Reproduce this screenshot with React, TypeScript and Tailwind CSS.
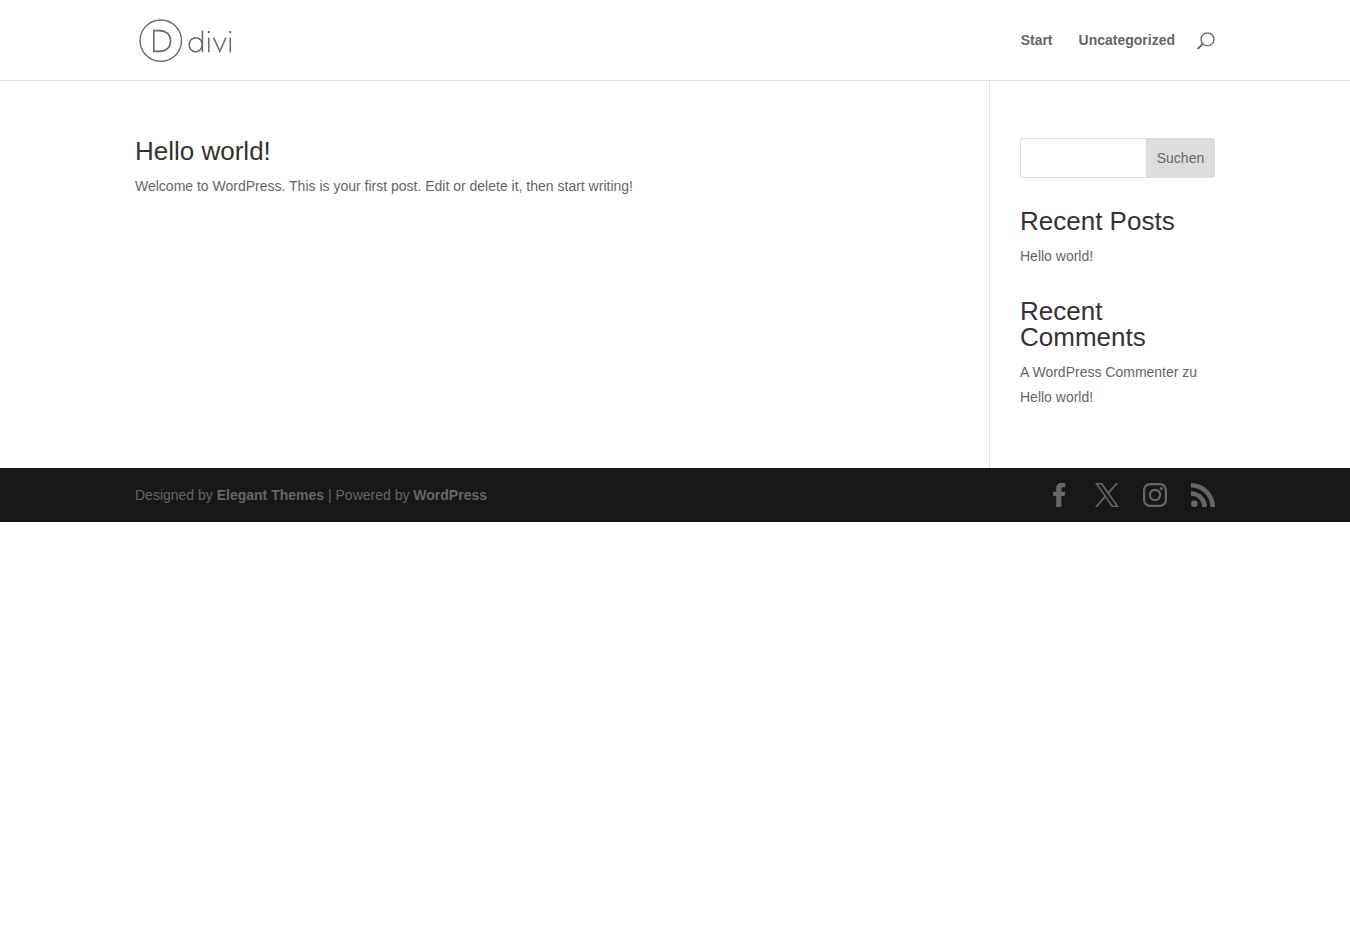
import React from 'react';

function Logo() {
  return (
    <svg viewBox="0 0 94 44" className="ml-1 h-11 w-[94px]" fill="none" stroke="#666a6e" role="img" aria-label="divi">
      <circle cx="21.8" cy="22.7" r="20.7" strokeWidth="1.4" />
      <path d="M14.8 12.6H20.5C27.2 12.6 31.6 16.6 31.6 23S27.2 33.4 20.5 33.4H14.8Z" strokeWidth="1.6" />
      <ellipse cx="56.7" cy="26.8" rx="6.6" ry="7" strokeWidth="1.5" />
      <path d="M63.4 12.6V34.2M69.8 19.6V34.2M74.6 19.6L80.8 33.2L87 19.6M91.3 19.6V34.2" strokeWidth="1.5" />
      <path d="M69.8 13V15.2M91.3 13V15.2" strokeWidth="1.8" />
    </svg>
  );
}

function SearchIcon() {
  return (
    <svg viewBox="0 0 18 18" className="mt-0.5 h-[18px] w-[18px]" fill="none" stroke="currentColor" aria-hidden="true">
      <circle cx="10.5" cy="7.3" r="6.5" strokeWidth="1.3" />
      <path d="M5.5 12.1L1.2 16.4" strokeWidth="2" strokeLinecap="round" />
    </svg>
  );
}

const socials = [
  {
    name: 'Facebook',
    icon: <path d="M9.2 24V13H6V8.8h3.2V5.4C9.2 1.9 11.2 0 14.8 0h3.4v4.2h-2.1c-1.3 0-1.7.6-1.7 1.8v2.8h3.8L17.6 13h-3.2v11z" />,
  },
  {
    name: 'X',
    icon: (
      <path d="M14.258 10.152L23.176 0h-2.113l-7.747 8.813L7.133 0H0l9.352 13.328L0 23.973h2.113l8.176-9.309 6.531 9.309h7.133zm-2.895 3.293l-.949-1.328L2.875 1.56h3.246l6.086 8.523.945 1.328 7.91 11.078h-3.246z" />
    ),
  },
  {
    name: 'Instagram',
    icon: (
      <>
        <rect x="1.1" y="1.1" width="21.8" height="21.8" rx="6" fill="none" stroke="currentColor" strokeWidth="2.2" />
        <circle cx="12" cy="12" r="5.1" fill="none" stroke="currentColor" strokeWidth="2.2" />
        <circle cx="18.4" cy="5.6" r="1.5" />
      </>
    ),
  },
  {
    name: 'RSS',
    icon: (
      <>
        <circle cx="3.3" cy="20.7" r="3.3" />
        <path d="M0 8.2v4.6A11.2 11.2 0 0 1 11.2 24h4.6A15.8 15.8 0 0 0 0 8.2z" />
        <path d="M0 0v4.6A19.4 19.4 0 0 1 19.4 24H24A24 24 0 0 0 0 0z" />
      </>
    ),
  },
];

const container = 'mx-auto w-4/5 max-w-[1080px]';
const heading = 'pb-2.5 text-[26px] leading-[26px] text-[#333]';

export default function App() {
  return (
    <div className="bg-white font-['Liberation_Sans',Arial,sans-serif] text-sm leading-6 text-[#666]">
      <header className="border-b border-[#e2e2e2]">
        <div className={`${container} flex h-20 items-center justify-between`}>
          <a href="#home"><Logo /></a>
          <nav className="flex items-center font-bold" aria-label="Main">
            <a href="#start" className="mr-[26px]">Start</a>
            <a href="#uncategorized" className="mr-[22px]">Uncategorized</a>
            <button type="button" aria-label="Search"><SearchIcon /></button>
          </nav>
        </div>
      </header>

      <div className={`${container} flex`}>
        <main className="flex-1 pt-[57px] pb-[58px]">
          <article>
            <h1 className={heading}>Hello world!</h1>
            <p>Welcome to WordPress. This is your first post. Edit or delete it, then start writing!</p>
          </article>
        </main>
        <aside className="w-[226px] border-l border-[#e2e2e2] pt-[57px] pb-[58px] pl-[30px]">
          <form className="flex h-10" role="search" onSubmit={(e) => e.preventDefault()}>
            <input
              type="text"
              aria-label="Suchen"
              className="min-w-0 flex-1 rounded-l-[3px] border border-r-0 border-[#ddd] px-2 outline-none"
            />
            <button type="submit" className="w-[69px] rounded-r-[3px] bg-[#ddd]">Suchen</button>
          </form>
          <section className="mt-[30px]">
            <h2 className={heading}>Recent Posts</h2>
            <ul>
              <li><a href="#hello-world">Hello world!</a></li>
            </ul>
          </section>
          <section className="mt-[30px]">
            <h2 className={heading}>Recent Comments</h2>
            <ul>
              <li className="leading-[25px]">
                <a href="#commenter">A WordPress Commenter</a> zu <a href="#hello-world">Hello world!</a>
              </li>
            </ul>
          </section>
        </aside>
      </div>

      <footer className="border-b border-[#0e0e10] bg-[#171717]">
        <div className={`${container} flex h-[53px] items-center justify-between`}>
          <p>
            Designed by <a href="#elegant-themes" className="font-bold">Elegant Themes</a> | Powered by{' '}
            <a href="#wordpress" className="font-bold">WordPress</a>
          </p>
          <ul className="flex gap-6">
            {socials.map((s) => (
              <li key={s.name}>
                <a href={`#${s.name.toLowerCase()}`} aria-label={s.name}>
                  <svg viewBox="0 0 24 24" className="h-6 w-6" fill="currentColor" aria-hidden="true">{s.icon}</svg>
                </a>
              </li>
            ))}
          </ul>
        </div>
      </footer>
    </div>
  );
}
